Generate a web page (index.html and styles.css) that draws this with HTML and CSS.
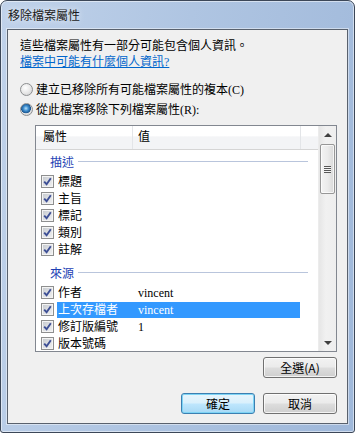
FILE: index.html
```html
<!DOCTYPE html>
<html lang="zh-Hant">
  <head>
    <meta charset="UTF-8" />
    <title>移除檔案屬性</title>
    <link rel="stylesheet" href="styles.css">
  </head>
  <body>
    <div class="win">
      <div class="win__title">移除檔案屬性</div>
      <div class="win__client">
        <p class="intro">這些檔案屬性有一部分可能包含個人資訊。</p>
        <a class="link" href="#">檔案中可能有什麼個人資訊?</a>
        <label class="opt opt--first"><span class="radio"></span>建立已移除所有可能檔案屬性的複本(C)</label>
        <label class="opt"><span class="radio radio--on"></span>從此檔案移除下列檔案屬性(R):</label>

        <div class="list">
          <div class="list__main">
            <div class="list__head">
              <span class="head__col head__col--name">屬性</span>
              <span class="head__col head__col--value">值</span>
              <span class="head__col head__col--rest"></span>
            </div>

            <div class="group"><span>描述</span></div>
            <div class="row"><span class="check"><svg width="9" height="9" viewBox="0 0 9 9"><path d="M1.2 4.6 L3.6 7.2 L7.8 1.2" fill="none" stroke="#3d4f95" stroke-width="1.9"/></svg></span><span class="row__cells"><span class="cell cell--name">標題</span><span class="cell cell--value"></span></span></div>
            <div class="row"><span class="check"><svg width="9" height="9" viewBox="0 0 9 9"><path d="M1.2 4.6 L3.6 7.2 L7.8 1.2" fill="none" stroke="#3d4f95" stroke-width="1.9"/></svg></span><span class="row__cells"><span class="cell cell--name">主旨</span><span class="cell cell--value"></span></span></div>
            <div class="row"><span class="check"><svg width="9" height="9" viewBox="0 0 9 9"><path d="M1.2 4.6 L3.6 7.2 L7.8 1.2" fill="none" stroke="#3d4f95" stroke-width="1.9"/></svg></span><span class="row__cells"><span class="cell cell--name">標記</span><span class="cell cell--value"></span></span></div>
            <div class="row"><span class="check"><svg width="9" height="9" viewBox="0 0 9 9"><path d="M1.2 4.6 L3.6 7.2 L7.8 1.2" fill="none" stroke="#3d4f95" stroke-width="1.9"/></svg></span><span class="row__cells"><span class="cell cell--name">類別</span><span class="cell cell--value"></span></span></div>
            <div class="row"><span class="check"><svg width="9" height="9" viewBox="0 0 9 9"><path d="M1.2 4.6 L3.6 7.2 L7.8 1.2" fill="none" stroke="#3d4f95" stroke-width="1.9"/></svg></span><span class="row__cells"><span class="cell cell--name">註解</span><span class="cell cell--value"></span></span></div>

            <div class="group group--next"><span>來源</span></div>
            <div class="row"><span class="check"><svg width="9" height="9" viewBox="0 0 9 9"><path d="M1.2 4.6 L3.6 7.2 L7.8 1.2" fill="none" stroke="#3d4f95" stroke-width="1.9"/></svg></span><span class="row__cells"><span class="cell cell--name">作者</span><span class="cell cell--value">vincent</span></span></div>
            <div class="row row--selected"><span class="check"><svg width="9" height="9" viewBox="0 0 9 9"><path d="M1.2 4.6 L3.6 7.2 L7.8 1.2" fill="none" stroke="#3d4f95" stroke-width="1.9"/></svg></span><span class="row__cells"><span class="cell cell--name">上次存檔者</span><span class="cell cell--value">vincent</span></span></div>
            <div class="row"><span class="check"><svg width="9" height="9" viewBox="0 0 9 9"><path d="M1.2 4.6 L3.6 7.2 L7.8 1.2" fill="none" stroke="#3d4f95" stroke-width="1.9"/></svg></span><span class="row__cells"><span class="cell cell--name">修訂版編號</span><span class="cell cell--value">1</span></span></div>
            <div class="row"><span class="check"><svg width="9" height="9" viewBox="0 0 9 9"><path d="M1.2 4.6 L3.6 7.2 L7.8 1.2" fill="none" stroke="#3d4f95" stroke-width="1.9"/></svg></span><span class="row__cells"><span class="cell cell--name">版本號碼</span><span class="cell cell--value"></span></span></div>
          </div>

          <div class="scroll">
            <div class="scroll__btn"><span class="arrow arrow--up"></span></div>
            <div class="scroll__thumb"><span class="grip"></span></div>
            <div class="scroll__track"></div>
            <div class="scroll__btn"><span class="arrow arrow--down"></span></div>
          </div>
        </div>

        <div class="actions actions--select">
          <button class="btn">全選(A)</button>
        </div>
        <div class="actions actions--main">
          <button class="btn btn--default">確定</button>
          <button class="btn">取消</button>
        </div>
      </div>
    </div>
  </body>
</html>
```

FILE: styles.css
```css
* {
  box-sizing: border-box;
  margin: 0;
  padding: 0;
}

body {
  background: #ffffff;
  font-family: "Liberation Serif", "Noto Sans CJK TC", serif;
  font-size: 12px;
  color: #000;
}

/* window frame */
.win {
  width: 355px;
  height: 433px;
  border: 1px solid #3c4758;
  border-radius: 7px 7px 3px 3px;
  background: linear-gradient(100deg, #c0d2ea 0%, #afc5e2 45%, #9fb8da 100%);
  box-shadow: inset 0 0 0 1px rgba(255, 255, 255, 0.5);
  padding: 0 6px 8px;
  display: flex;
  flex-direction: column;
}
.win__title {
  height: 28px;
  padding-left: 1px;
  line-height: 28px;
  font-family: "Noto Sans CJK TC", sans-serif;
  font-size: 12px;
  color: #1b1b1b;
  text-shadow: 0 0 6px rgba(255, 255, 255, 0.9);
}
.win__client {
  flex: 1;
  border: 1px solid #59616d;
  background: #f0f0f0;
  box-shadow: 0 0 0 1px rgba(255, 255, 255, 0.45);
  padding: 8px 10px 0 12px;
}

/* top texts */
.intro {
  line-height: 16px;
}
.link {
  display: block;
  line-height: 16px;
  color: #0066cc;
  text-decoration: underline;
}
.opt {
  display: flex;
  align-items: center;
  height: 16px;
  margin-top: 4px;
}
.opt--first {
  margin-top: 11px;
}
.radio {
  width: 13px;
  height: 13px;
  margin-right: 3px;
  border-radius: 50%;
  border: 1px solid #8d8f91;
  background: radial-gradient(circle at 40% 35%, #ffffff 0%, #e6e6e6 55%, #c9cbcd 100%);
}
.radio--on {
  background:
    radial-gradient(circle at 45% 40%, #b8e0f8 0%, #3f8fd0 28%, #1d5790 52%, transparent 58%),
    radial-gradient(circle at 40% 35%, #ffffff 0%, #e6e6e6 55%, #c9cbcd 100%);
}

/* property list */
.list {
  display: flex;
  width: 302px;
  height: 227px;
  margin: 8px 0 0 15px;
  border: 1px solid #828790;
  background: #fff;
  overflow: hidden;
}
.list__main {
  width: 282px;
}
.list__head {
  display: flex;
  height: 24px;
  border-bottom: 1px solid #d5d5d5;
  background: linear-gradient(#ffffff 0%, #ffffff 45%, #f3f4f6 46%, #f3f4f6 100%);
}
.head__col {
  line-height: 23px;
  padding-left: 7px;
  border-right: 1px solid #e3e5e8;
}
.head__col--name {
  width: 97px;
}
.head__col--value {
  width: 168px;
  padding-left: 5px;
}
.head__col--rest {
  flex: 1;
  border-right: none;
}

.group {
  display: flex;
  align-items: center;
  height: 23px;
  padding: 0 10px 0 14px;
  color: #1e3fb4;
}
.group::after {
  content: "";
  flex: 1;
  height: 1px;
  margin-left: 4px;
  background: #b9c5dc;
}
.group--next {
  margin-top: 3px;
}

.row {
  display: flex;
  align-items: center;
  height: 17px;
  padding-left: 5px;
}
.check {
  display: flex;
  align-items: center;
  justify-content: center;
  width: 13px;
  height: 13px;
  margin-right: 3px;
  border: 1px solid #8e8f8f;
  background: linear-gradient(135deg, #c4c8cd 0%, #dfe1e4 55%, #f2f2f2 100%);
  box-shadow: inset 0 0 0 1px #f4f4f4;
}
.row__cells {
  display: flex;
  height: 16px;
  line-height: 16px;
}
.cell--name {
  width: 81px;
  padding-left: 1px;
}
.cell--value {
  width: 162px;
}
.row--selected .row__cells {
  background: #3399ff;
  color: #fff;
}

/* scrollbar */
.scroll {
  display: flex;
  flex-direction: column;
  width: 18px;
  background: linear-gradient(90deg, #e6e6e6 0%, #f1f1f1 40%, #eeeeee 100%);
  border-left: 1px solid #ececec;
}
.scroll__btn {
  display: flex;
  align-items: center;
  justify-content: center;
  height: 17px;
}
.arrow {
  width: 0;
  height: 0;
  border-left: 4px solid transparent;
  border-right: 4px solid transparent;
}
.arrow--up {
  border-bottom: 4px solid #404040;
}
.arrow--down {
  border-top: 4px solid #404040;
}
.scroll__thumb {
  display: flex;
  align-items: center;
  justify-content: center;
  height: 50px;
  margin: 1px 0 0 1px;
  width: 15px;
  border: 1px solid #979797;
  border-radius: 2px;
  background: linear-gradient(90deg, #f3f3f3 0%, #ebebeb 50%, #d9d9d9 100%);
  box-shadow: inset 0 0 0 1px rgba(255, 255, 255, 0.7);
}
.grip {
  width: 7px;
  height: 7px;
  background: repeating-linear-gradient(#575757 0 1px, #f4f4f4 1px 2px);
}
.scroll__track {
  flex: 1;
}

/* buttons */
.actions {
  display: flex;
  justify-content: flex-end;
  gap: 8px;
}
.actions--select {
  margin-top: 5px;
}
.actions--main {
  margin-top: 15px;
}
.btn {
  width: 74px;
  height: 21px;
  border: 1px solid #707070;
  border-radius: 3px;
  font-family: "Noto Sans CJK TC", sans-serif;
  font-size: 12px;
  color: #000;
  background: linear-gradient(#f2f2f2 0%, #ebebeb 48%, #dddddd 52%, #cfcfcf 100%);
  box-shadow: inset 0 0 0 1px rgba(255, 255, 255, 0.75);
}
.btn--default {
  border-color: #3c7fb1;
  background: linear-gradient(#e8f5fc 0%, #d9f0fc 48%, #bee6fd 52%, #a7d9f5 100%);
  box-shadow: inset 0 0 0 1px #7ed4f5;
}
```
